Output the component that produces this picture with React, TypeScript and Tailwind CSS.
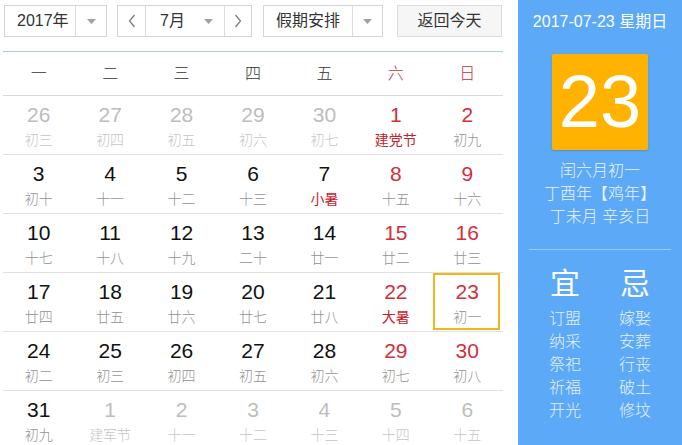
import React from 'react';

type Day = {
  n: number;
  lunar: string;
  out?: boolean;
  holiday?: boolean;
  selected?: boolean;
};

const weeks: Day[][] = [
  [
    { n: 26, lunar: '初三', out: true },
    { n: 27, lunar: '初四', out: true },
    { n: 28, lunar: '初五', out: true },
    { n: 29, lunar: '初六', out: true },
    { n: 30, lunar: '初七', out: true },
    { n: 1, lunar: '建党节', holiday: true },
    { n: 2, lunar: '初九' },
  ],
  [
    { n: 3, lunar: '初十' },
    { n: 4, lunar: '十一' },
    { n: 5, lunar: '十二' },
    { n: 6, lunar: '十三' },
    { n: 7, lunar: '小暑', holiday: true },
    { n: 8, lunar: '十五' },
    { n: 9, lunar: '十六' },
  ],
  [
    { n: 10, lunar: '十七' },
    { n: 11, lunar: '十八' },
    { n: 12, lunar: '十九' },
    { n: 13, lunar: '二十' },
    { n: 14, lunar: '廿一' },
    { n: 15, lunar: '廿二' },
    { n: 16, lunar: '廿三' },
  ],
  [
    { n: 17, lunar: '廿四' },
    { n: 18, lunar: '廿五' },
    { n: 19, lunar: '廿六' },
    { n: 20, lunar: '廿七' },
    { n: 21, lunar: '廿八' },
    { n: 22, lunar: '大暑', holiday: true },
    { n: 23, lunar: '初一', selected: true },
  ],
  [
    { n: 24, lunar: '初二' },
    { n: 25, lunar: '初三' },
    { n: 26, lunar: '初四' },
    { n: 27, lunar: '初五' },
    { n: 28, lunar: '初六' },
    { n: 29, lunar: '初七' },
    { n: 30, lunar: '初八' },
  ],
  [
    { n: 31, lunar: '初九' },
    { n: 1, lunar: '建军节', out: true },
    { n: 2, lunar: '十一', out: true },
    { n: 3, lunar: '十二', out: true },
    { n: 4, lunar: '十三', out: true },
    { n: 5, lunar: '十四', out: true },
    { n: 6, lunar: '十五', out: true },
  ],
];

const weekdays = ['一', '二', '三', '四', '五', '六', '日'];
const yi = ['订盟', '纳采', '祭祀', '祈福', '开光'];
const ji = ['嫁娶', '安葬', '行丧', '破土', '修坟'];

const Caret = () => (
  <svg width="9" height="5" viewBox="0 0 9 5">
    <path d="M0 0h9L4.5 5z" fill="#a0a0a0" />
  </svg>
);

const Chevron = ({ dir }: { dir: 'left' | 'right' }) => (
  <svg width="8" height="14" viewBox="0 0 8 14">
    <path
      d={dir === 'left' ? 'M6.5 1L1.5 7l5 6' : 'M1.5 1l5 6-5 6'}
      fill="none"
      stroke="#777"
      strokeWidth="1.2"
    />
  </svg>
);

const DayCell = ({ day, col }: { day: Day; col: number }) => {
  const weekend = col >= 5;
  let numColor = 'text-[#111]';
  if (day.out) numColor = 'text-[#bdbdbd]';
  else if (weekend) numColor = 'text-[#d22f3a]';

  let lunarColor = 'text-[#939393] font-light';
  if (day.out) lunarColor = 'text-[#c6c6c6] font-light';
  else if (day.holiday) lunarColor = 'text-[#c8222d]';

  return (
    <div className="relative flex flex-col items-center pt-[7px]">
      {day.selected && (
        <div className="absolute left-[1px] right-[3px] top-0 bottom-[1px] border-2 border-[#f2b51c]" />
      )}
      <div className={`text-[21px] leading-[24px] ${numColor}`}>{day.n}</div>
      <div className={`mt-[3px] text-[14px] leading-[20px] ${lunarColor}`}>{day.lunar}</div>
    </div>
  );
};

export default function App() {
  return (
    <div
      className="flex h-[445px] w-[682px] overflow-hidden bg-white"
      style={{ fontFamily: '"Liberation Sans", "Noto Sans CJK SC", sans-serif' }}
    >
      {/* Left: calendar */}
      <div className="w-[518px] shrink-0">
        <div className="flex items-center pl-[4px] pt-[5px] text-[16px] text-[#333]">
          <div className="flex h-[32px] w-[103px] border border-[#d4d4d4]">
            <div className="flex flex-1 items-center pl-[12px]">2017年</div>
            <div className="flex w-[31px] items-center justify-center border-l border-[#dcdcdc]">
              <Caret />
            </div>
          </div>

          <div className="ml-[10px] flex h-[32px] w-[135px] border border-[#d4d4d4]">
            <div className="flex w-[28px] items-center justify-center border-r border-[#dcdcdc]">
              <Chevron dir="left" />
            </div>
            <div className="flex w-[78px] items-center justify-between pl-[14px] pr-[11px]">
              <span>7月</span>
              <Caret />
            </div>
            <div className="flex flex-1 items-center justify-center border-l border-[#dcdcdc]">
              <Chevron dir="right" />
            </div>
          </div>

          <div className="ml-[11px] flex h-[32px] w-[120px] border border-[#d4d4d4]">
            <div className="flex flex-1 items-center pl-[12px]">假期安排</div>
            <div className="flex w-[30px] items-center justify-center border-l border-[#dcdcdc]">
              <Caret />
            </div>
          </div>

          <button className="ml-[14px] flex h-[32px] w-[105px] items-center justify-center border border-[#dcdcdc] bg-[#f6f6f6] text-[#333]">
            返回今天
          </button>
        </div>

        <div className="ml-[3px] mt-[14px] w-[500px] border-t border-[#a9cbec]">
          <div className="grid h-[44px] grid-cols-7 border-b border-[#dadada] text-[16px] font-light">
            {weekdays.map((w, i) => (
              <div
                key={w}
                className={`flex items-center justify-center ${i >= 5 ? 'text-[#c8303a]' : 'text-[#333]'}`}
              >
                {w}
              </div>
            ))}
          </div>
          {weeks.map((week, r) => (
            <div key={r} className="grid h-[59px] grid-cols-7 border-b border-[#e0e0e0]">
              {week.map((day, c) => (
                <DayCell key={c} day={day} col={c} />
              ))}
            </div>
          ))}
        </div>
      </div>

      {/* Right: today details */}
      <div className="flex flex-1 flex-col items-center bg-[#5ba9f7] text-white">
        <div className="mt-[12px] text-[16px] leading-[20px]">2017-07-23 星期日</div>
        <div className="mt-[22px] flex h-[96px] w-[96px] items-center justify-center rounded-[2px] bg-[#ffb300] text-[74px] leading-none shadow-[0_1px_2px_rgba(0,0,0,0.15)]">
          23
        </div>
        <div className="mt-[9px] flex flex-col items-center text-[16px] font-light leading-[23px] text-[#eaf4ff]">
          <div>闰六月初一</div>
          <div>丁酉年【鸡年】</div>
          <div>丁未月 辛亥日</div>
        </div>
        <div className="mt-[21px] h-px w-[142px] bg-[#9ccaf7]" />
        <div className="mt-[15px] flex gap-[30px]">
          <div className="flex w-[40px] flex-col items-center">
            <div className="text-[30px] leading-[38px]">宜</div>
            <div className="mt-[4px] flex flex-col items-center text-[16px] font-light leading-[23px] text-[#e4f0fe]">
              {yi.map((t) => (
                <div key={t}>{t}</div>
              ))}
            </div>
          </div>
          <div className="flex w-[40px] flex-col items-center">
            <div className="text-[30px] leading-[38px]">忌</div>
            <div className="mt-[4px] flex flex-col items-center text-[16px] font-light leading-[23px] text-[#e4f0fe]">
              {ji.map((t) => (
                <div key={t}>{t}</div>
              ))}
            </div>
          </div>
        </div>
      </div>
    </div>
  );
}
